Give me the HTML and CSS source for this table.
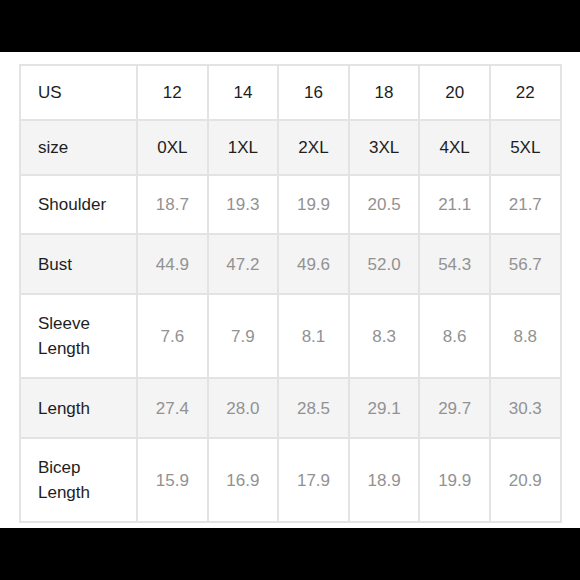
FILE: index.html
```html
<!DOCTYPE html>
<html>
<head>
<meta charset="utf-8">
<link rel="stylesheet" href="styles.css">
</head>
<body>
<div class="bar top"></div>
<main class="content">
<table class="chart">
<colgroup>
<col class="c-label"><col class="c-val"><col class="c-val"><col class="c-val"><col class="c-val"><col class="c-val"><col class="c-val">
</colgroup>
<tbody>
<tr class="r-head"><th>US</th><td class="dark">12</td><td class="dark">14</td><td class="dark">16</td><td class="dark">18</td><td class="dark">20</td><td class="dark">22</td></tr>
<tr class="r-size alt"><th>size</th><td class="dark">0XL</td><td class="dark">1XL</td><td class="dark">2XL</td><td class="dark">3XL</td><td class="dark">4XL</td><td class="dark">5XL</td></tr>
<tr class="r-short"><th>Shoulder</th><td>18.7</td><td>19.3</td><td>19.9</td><td>20.5</td><td>21.1</td><td>21.7</td></tr>
<tr class="r-std alt"><th>Bust</th><td>44.9</td><td>47.2</td><td>49.6</td><td>52.0</td><td>54.3</td><td>56.7</td></tr>
<tr class="r-tall"><th>Sleeve<br>Length</th><td>7.6</td><td>7.9</td><td>8.1</td><td>8.3</td><td>8.6</td><td>8.8</td></tr>
<tr class="r-std alt"><th>Length</th><td>27.4</td><td>28.0</td><td>28.5</td><td>29.1</td><td>29.7</td><td>30.3</td></tr>
<tr class="r-tall"><th>Bicep<br>Length</th><td>15.9</td><td>16.9</td><td>17.9</td><td>18.9</td><td>19.9</td><td>20.9</td></tr>
</tbody>
</table>
</main>
<div class="bar bottom"></div>
</body>
</html>
```
FILE: styles.css
```css
html, body {
  margin: 0;
  padding: 0;
  background: #ffffff;
}
body {
  width: 580px;
  height: 580px;
  display: flex;
  flex-direction: column;
  overflow: hidden;
  font-family: "Liberation Sans", Arial, sans-serif;
}
.bar {
  background: #000000;
}
.bar.top {
  height: 52px;
  flex: none;
}
.bar.bottom {
  flex: 1;
}
.content {
  padding: 12px 0 5px 19px;
  flex: none;
}
.chart {
  border-collapse: collapse;
  table-layout: fixed;
  width: 541px;
}
.c-label { width: 117px; }
.c-val { width: 70.6px; }
.chart th, .chart td {
  border: 2px solid #e3e3e3;
  font-size: 17px;
  font-weight: normal;
  line-height: 25px;
  padding: 0;
  vertical-align: middle;
}
.chart th {
  text-align: left;
  padding-left: 17px;
  color: #1e1e1e;
}
.chart td {
  text-align: center;
  color: #929292;
}
.chart td.dark {
  color: #1e1e1e;
}
.alt th, .alt td {
  background: #f4f4f4;
}
.r-head { height: 55px; }
.r-size { height: 55px; }
.r-short { height: 59px; }
.r-std { height: 60px; }
.r-tall { height: 84px; }
```
